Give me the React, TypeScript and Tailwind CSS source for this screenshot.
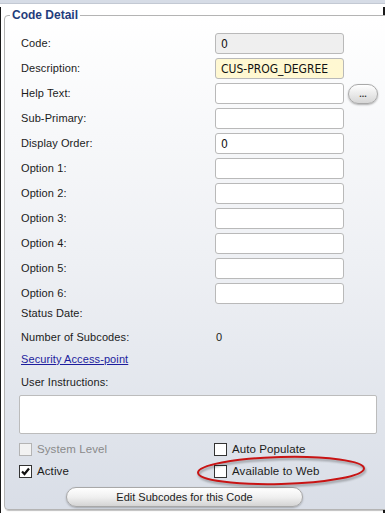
import { ReactNode } from "react";

const font = { fontFamily: '"Liberation Sans", Arial, sans-serif' };
const narrow = { fontFamily: '"Liberation Sans Narrow", "DejaVu Sans Condensed", "Liberation Sans", sans-serif' };

function Field({ value = "", tone = "white" }: { value?: string; tone?: "white" | "gray" | "yellow" }) {
  const bg = tone === "gray" ? "bg-[#efefef]" : tone === "yellow" ? "bg-[#fff8d2]" : "bg-white";
  return (
    <div
      className={`w-[129px] h-[21px] rounded-[3px] border border-[#b9b9b9] ${bg} pl-[5px] flex items-center text-[12px] text-[#111] whitespace-nowrap overflow-hidden`}
      style={narrow}
    >
      {value}
    </div>
  );
}

function Row({ label, children }: { label: string; children?: ReactNode }) {
  return (
    <div className="flex items-center h-[21px] mt-[4px] first:mt-0">
      <span className="w-[196px] pl-[2px] text-[11px] tracking-[0.1px] text-[#1b1b1b]">{label}</span>
      {children}
    </div>
  );
}

function Check({ label, checked = false, disabled = false }: { label: string; checked?: boolean; disabled?: boolean }) {
  return (
    <div className="flex items-center gap-[5px]">
      <span
        className={`w-[13px] h-[13px] border flex items-center justify-center ${
          disabled ? "border-[#b4b4b4] bg-[#f2f2f2]" : "border-[#333] bg-white"
        }`}
      >
        {checked && (
          <svg width="9" height="9" viewBox="0 0 9 9">
            <path d="M1 4.5 L3.5 7 L8 1.5" fill="none" stroke="#111" strokeWidth="2.2" />
          </svg>
        )}
      </span>
      <span className={`text-[11.5px] tracking-[0.1px] ${disabled ? "text-[#8a8a8a]" : "text-[#1b1b1b]"}`}>{label}</span>
    </div>
  );
}

export default function App() {
  return (
    <div className="relative w-[385px] h-[513px] bg-white overflow-hidden" style={font}>
      <div className="h-[4px] bg-[#d6dce6] border-b border-[#c3c9d3]" />
      <div className="h-[509px] border-l border-r-2 border-b-2 border-[#1a1a1a] pl-[3px]">
        <fieldset
          className={
            "w-[378px] mt-[3px] rounded-[4px] border border-[#b4b4b4] px-[14px] pt-[10px] pb-[1px] " +
            "bg-gradient-to-b from-white via-[#eef0f4] to-[#d9dee7] shadow-[1px_1px_1px_rgba(0,0,0,0.25)]"
          }
        >
          <legend className="-ml-[9px] px-[2px] text-[12px] leading-[16px] font-bold text-[#1f3d7c]">Code Detail</legend>

          <div className="flex flex-col">
            <Row label="Code:">
              <Field value="0" tone="gray" />
            </Row>
            <Row label="Description:">
              <Field value="CUS-PROG_DEGREE" tone="yellow" />
            </Row>
            <Row label="Help Text:">
              <Field />
              <button className="ml-[4px] w-[30px] h-[20px] rounded-full border border-[#a9a9a9] bg-gradient-to-b from-white to-[#d6d6d6] shadow-[0_1px_2px_rgba(0,0,0,0.3)] text-[9px] leading-none text-[#333] font-bold pt-[2px]">
                ...
              </button>
            </Row>
            <Row label="Sub-Primary:">
              <Field />
            </Row>
            <Row label="Display Order:">
              <Field value="0" />
            </Row>
            <Row label="Option 1:">
              <Field />
            </Row>
            <Row label="Option 2:">
              <Field />
            </Row>
            <Row label="Option 3:">
              <Field />
            </Row>
            <Row label="Option 4:">
              <Field />
            </Row>
            <Row label="Option 5:">
              <Field />
            </Row>
            <Row label="Option 6:">
              <Field />
            </Row>
          </div>

          <div className="mt-[1px] h-[16px] flex items-center pl-[2px] text-[11px] tracking-[0.1px] text-[#1b1b1b]">Status Date:</div>
          <div className="mt-[8px] h-[16px] flex items-center text-[11px] tracking-[0.1px] text-[#1b1b1b]">
            <span className="w-[196px] pl-[2px]">Number of Subcodes:</span>
            <span className="pl-[1px]">0</span>
          </div>
          <div className="mt-[6px] h-[16px] flex items-center pl-[2px]">
            <a href="#" className="text-[11px] tracking-[0.1px] text-[#1d1d9e] underline">
              Security Access-point
            </a>
          </div>
          <div className="mt-[7px] h-[16px] flex items-center pl-[2px] text-[11px] tracking-[0.1px] text-[#1b1b1b]">User Instructions:</div>
          <div className="mt-[5px] w-[358px] h-[39px] rounded-[2px] border border-[#bcbcbc] bg-white" />

          <div className="mt-[7px] h-[16px] grid grid-cols-[195px_1fr] items-center">
            <Check label="System Level" disabled />
            <Check label="Auto Populate" />
          </div>
          <div className="mt-[6px] h-[16px] grid grid-cols-[195px_1fr] items-center">
            <Check label="Active" checked />
            <Check label="Available to Web" />
          </div>

          <button className="mt-[8px] ml-[47px] w-[237px] h-[20px] rounded-full border border-[#a8a8a8] bg-gradient-to-b from-white via-[#f0f0f0] to-[#d4d4d4] shadow-[0_1px_2px_rgba(0,0,0,0.25)] text-[11px] text-[#1b1b1b]">
            Edit Subcodes for this Code
          </button>
        </fieldset>
      </div>

      <svg
        className="absolute left-[190px] top-[450px] drop-shadow-[1px_2px_1px_rgba(0,0,0,0.35)]"
        width="185"
        height="42"
        viewBox="0 0 185 42"
      >
        <ellipse cx="91" cy="20.5" rx="83" ry="13.5" fill="none" stroke="#c81414" strokeWidth="2" transform="rotate(-1.5 91 20.5)" />
      </svg>
    </div>
  );
}
